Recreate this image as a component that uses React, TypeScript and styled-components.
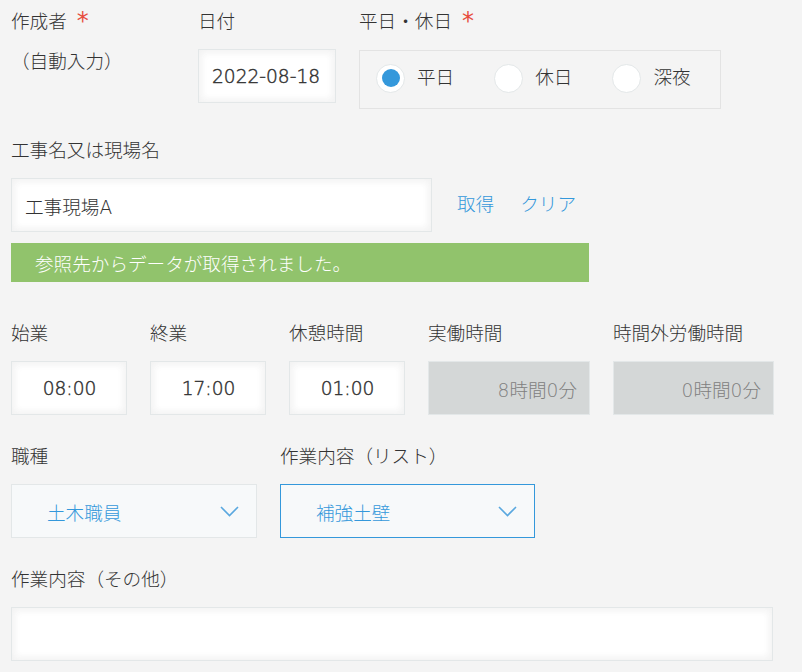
import React from "react";
import styled, { createGlobalStyle, css } from "styled-components";

const Global = createGlobalStyle`
  html, body {
    margin: 0;
    padding: 0;
    background: #f4f4f4;
  }
  body {
    font-family: "DejaVu Sans", "Noto Sans CJK JP", sans-serif;
    font-weight: 300;
    color: #333333;
    font-size: 18.6px;
  }
`;

const Form = styled.div`
  display: flex;
  flex-direction: column;
  gap: 30px;
  padding: 10px 11px 0 11px;
  width: 780px;
  box-sizing: border-box;
`;

const Row = styled.div`
  display: flex;
  align-items: flex-start;
  gap: 23px;
`;

const Field = styled.div<{ $w?: number }>`
  display: flex;
  flex-direction: column;
  width: ${(p) => (p.$w ? `${p.$w}px` : "auto")};
  flex: none;
`;

const Label = styled.div`
  height: 24px;
  line-height: 24px;
  margin-bottom: 15px;
  white-space: nowrap;
  color: #333;
`;

const Required = styled.span`
  color: #e74c3c;
  font-family: "DejaVu Sans", sans-serif;
  font-weight: 400;
  font-size: 24px;
  margin-left: 10px;
  vertical-align: top;
  line-height: 22px;
`;

const Plain = styled.div`
  line-height: 26px;
  white-space: nowrap;
`;

const boxBase = css`
  box-sizing: border-box;
  height: 54px;
  border: 1px solid #e3e7e8;
  display: flex;
  align-items: center;
  white-space: nowrap;
`;

const TextBox = styled.div<{
  $w: number;
  $align?: "left" | "center" | "right";
  $disabled?: boolean;
  $num?: boolean;
}>`
  ${boxBase};
  width: ${(p) => p.$w}px;
  padding: 0 12px 0 13px;
  -webkit-text-stroke: ${(p) => (p.$num ? "0.45px" : "0")} currentColor;
  background: ${(p) => (p.$disabled ? "#d4d7d7" : "#ffffff")};
  color: ${(p) => (p.$disabled ? "#808080" : "#333333")};
  box-shadow: ${(p) =>
    p.$disabled
      ? "none"
      : "inset 1px 1px 10px #f2f2f2, inset -1px -1px 10px #f2f2f2"};
  justify-content: ${(p) =>
    p.$align === "center" ? "center" : p.$align === "right" ? "flex-end" : "flex-start"};
`;

const RadioGroup = styled.div`
  box-sizing: border-box;
  width: 362px;
  height: 59px;
  margin-top: 1px;
  border: 1px solid #e3e3e3;
  display: flex;
  align-items: center;
  padding-left: 16px;
  padding-bottom: 3px;
  gap: 40px;
`;

const RadioItem = styled.label`
  display: flex;
  align-items: center;
  gap: 12px;
  line-height: 26px;
`;

const RadioCircle = styled.span<{ $checked?: boolean }>`
  box-sizing: border-box;
  width: 29px;
  height: 29px;
  border-radius: 50%;
  background: #ffffff;
  border: 1px solid #e3e7e8;
  display: flex;
  align-items: center;
  justify-content: center;
  &::after {
    content: "";
    width: 18px;
    height: 18px;
    border-radius: 50%;
    background: ${(p) => (p.$checked ? "#3498db" : "transparent")};
  }
`;

const LookupLine = styled.div`
  display: flex;
  align-items: center;
`;

const LinkButton = styled.span<{ $ml: number }>`
  color: #3498db;
  margin-left: ${(p) => p.$ml}px;
  line-height: 26px;
  cursor: pointer;
`;

const Notice = styled.div`
  box-sizing: border-box;
  width: 578px;
  height: 39px;
  margin-top: 11px;
  margin-bottom: 10px;
  background: #91c36c;
  color: #ffffff;
  padding-left: 24px;
  display: flex;
  align-items: center;
`;

const Select = styled.div<{ $w: number; $focus?: boolean }>`
  ${boxBase};
  width: ${(p) => p.$w}px;
  background: #f7f9fa;
  border-color: ${(p) => (p.$focus ? "#3498db" : "#e3e7e8")};
  color: #3498db;
  padding: 0 17px 0 35px;
  justify-content: space-between;
`;

const Chevron = () => (
  <svg width="19" height="11" viewBox="0 0 19 11" fill="none">
    <polyline points="1,1 9.5,9.5 18,1" stroke="#5aa8df" strokeWidth="1.6" />
  </svg>
);

const TextArea = styled.div`
  ${boxBase};
  width: 762px;
  background: #ffffff;
  box-shadow: inset 1px 1px 10px #f2f2f2, inset -1px -1px 10px #f2f2f2;
`;

export default function App() {
  return (
    <>
      <Global />
      <Form>
        <Row>
          <Field $w={164}>
            <Label>
              作成者<Required>*</Required>
            </Label>
            <Plain>（自動入力）</Plain>
          </Field>
          <Field>
            <Label>日付</Label>
            <TextBox $w={138} $num>
              2022-08-18
            </TextBox>
          </Field>
          <Field>
            <Label>
              平日・休日<Required>*</Required>
            </Label>
            <RadioGroup>
              <RadioItem>
                <RadioCircle $checked />
                平日
              </RadioItem>
              <RadioItem>
                <RadioCircle />
                休日
              </RadioItem>
              <RadioItem>
                <RadioCircle />
                深夜
              </RadioItem>
            </RadioGroup>
          </Field>
        </Row>

        <Field>
          <Label>工事名又は現場名</Label>
          <LookupLine>
            <TextBox $w={421}>工事現場A</TextBox>
            <LinkButton $ml={25}>取得</LinkButton>
            <LinkButton $ml={26}>クリア</LinkButton>
          </LookupLine>
          <Notice>参照先からデータが取得されました。</Notice>
        </Field>

        <Row>
          <Field>
            <Label>始業</Label>
            <TextBox $w={116} $align="center" $num>
              08:00
            </TextBox>
          </Field>
          <Field>
            <Label>終業</Label>
            <TextBox $w={116} $align="center" $num>
              17:00
            </TextBox>
          </Field>
          <Field>
            <Label>休憩時間</Label>
            <TextBox $w={116} $align="center" $num>
              01:00
            </TextBox>
          </Field>
          <Field>
            <Label>実働時間</Label>
            <TextBox $w={162} $align="right" $disabled>
              8時間0分
            </TextBox>
          </Field>
          <Field>
            <Label>時間外労働時間</Label>
            <TextBox $w={161} $align="right" $disabled>
              0時間0分
            </TextBox>
          </Field>
        </Row>

        <Row>
          <Field>
            <Label>職種</Label>
            <Select $w={246}>
              <span>土木職員</span>
              <Chevron />
            </Select>
          </Field>
          <Field>
            <Label>作業内容（リスト）</Label>
            <Select $w={255} $focus>
              <span>補強土壁</span>
              <Chevron />
            </Select>
          </Field>
        </Row>

        <Field>
          <Label>作業内容（その他）</Label>
          <TextArea />
        </Field>
      </Form>
    </>
  );
}
